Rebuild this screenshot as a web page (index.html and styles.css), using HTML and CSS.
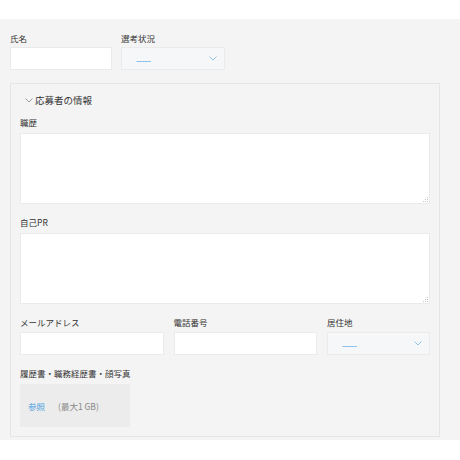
FILE: index.html
```html
<!DOCTYPE html>
<html lang="ja">
<head>
<meta charset="utf-8">
<link rel="stylesheet" href="styles.css">
</head>
<body>
<div class="topbar"></div>
<main class="page">
  <div class="row-top">
    <div class="field">
      <div class="label">氏名</div>
      <input class="input" type="text">
    </div>
    <div class="field">
      <div class="label">選考状況</div>
      <div class="select"><span class="dash">-----</span>
        <svg class="chev" width="8" height="5" viewBox="0 0 8 5"><polyline points="0.5,0.5 4,4 7.5,0.5" fill="none" stroke="#8fc3ec" stroke-width="1"/></svg>
      </div>
    </div>
  </div>

  <section class="panel">
    <div class="panel-head">
      <svg class="head-chev" width="8" height="5" viewBox="0 0 8 5"><polyline points="0.5,0.5 4,4 7.5,0.5" fill="none" stroke="#999" stroke-width="1"/></svg>
      <span>応募者の情報</span>
    </div>

    <div class="field block first">
      <div class="label">職歴</div>
      <div class="area-wrap">
        <textarea class="area"></textarea>
        <svg class="grip" width="7" height="7" viewBox="0 0 7 7"><g fill="#c4c4c4"><rect x="5" y="1" width="1" height="1"/><rect x="3" y="3" width="1" height="1"/><rect x="5" y="3" width="1" height="1"/><rect x="1" y="5" width="1" height="1"/><rect x="3" y="5" width="1" height="1"/><rect x="5" y="5" width="1" height="1"/></g></svg>
      </div>
    </div>

    <div class="field block">
      <div class="label">自己PR</div>
      <div class="area-wrap">
        <textarea class="area"></textarea>
        <svg class="grip" width="7" height="7" viewBox="0 0 7 7"><g fill="#c4c4c4"><rect x="5" y="1" width="1" height="1"/><rect x="3" y="3" width="1" height="1"/><rect x="5" y="3" width="1" height="1"/><rect x="1" y="5" width="1" height="1"/><rect x="3" y="5" width="1" height="1"/><rect x="5" y="5" width="1" height="1"/></g></svg>
      </div>
    </div>

    <div class="row-three block">
      <div class="field">
        <div class="label">メールアドレス</div>
        <input class="input" type="text">
      </div>
      <div class="field">
        <div class="label">電話番号</div>
        <input class="input" type="text">
      </div>
      <div class="field">
        <div class="label">居住地</div>
        <div class="select"><span class="dash">-----</span>
          <svg class="chev" width="8" height="5" viewBox="0 0 8 5"><polyline points="0.5,0.5 4,4 7.5,0.5" fill="none" stroke="#8fc3ec" stroke-width="1"/></svg>
        </div>
      </div>
    </div>

    <div class="field block">
      <div class="label">履歴書・職務経歴書・顔写真</div>
      <div class="upload">
        <span class="browse">参照</span>
        <span class="limit">(最大1 GB)</span>
      </div>
    </div>
  </section>
</main>
</body>
</html>
```

FILE: styles.css
```css
* { box-sizing: border-box; }

html, body {
  margin: 0;
  padding: 0;
  background: #ffffff;
  font-family: "Noto Sans CJK JP", "Noto Sans", sans-serif;
  color: #444;
}

.topbar {
  height: 19px;
  background: #ffffff;
}

.page {
  background: #f4f4f4;
  padding: 13px 20px 4px 10px;
  height: 421px;
}

.row-top {
  display: grid;
  grid-template-columns: 102px 104px;
  column-gap: 9px;
}

.field {
  display: flex;
  flex-direction: column;
  min-width: 0;
}

.label {
  font-size: 8.5px;
  line-height: 12px;
  height: 12px;
  margin-bottom: 3px;
  color: #333;
  font-weight: 400;
  white-space: nowrap;
}

.input {
  width: 100%;
  min-width: 0;
  height: 23px;
  border: 1px solid #ebebeb;
  background: #fff;
  margin: 0;
  padding: 0 6px;
  outline: none;
  font-family: inherit;
}

.select {
  height: 23px;
  border: 1px solid #ebebeb;
  background: #f6f7f9;
  display: flex;
  align-items: center;
  justify-content: space-between;
  padding: 2px 7px 0 14px;
}

.dash {
  font-size: 10px;
  line-height: 10px;
  color: #5aaae6;
  letter-spacing: -0.6px;
}

.chev {
  display: block;
  margin-top: -2px;
}

.panel {
  margin-top: 13px;
  border: 1px solid #e5e5e5;
  padding: 9px 9px 9px 9px;
}

.panel-head {
  display: flex;
  align-items: center;
  gap: 2px;
  padding-left: 5px;
  height: 14px;
  font-size: 9.5px;
  line-height: 14px;
  color: #333;
}

.head-chev {
  display: block;
}

.block {
  margin-top: 12px;
}

.block.first {
  margin-top: 9px;
}

.block .label {
  margin-bottom: 5px;
}

.area-wrap {
  position: relative;
}

.area {
  height: 71px;
  width: 100%;
  border: 1px solid #ebebeb;
  background: #fff;
  margin: 0;
  padding: 4px;
  resize: none;
  outline: none;
  display: block;
  font-family: inherit;
}

.grip {
  position: absolute;
  right: 1px;
  bottom: 1px;
  display: block;
}

.row-three {
  display: grid;
  grid-template-columns: minmax(0, 1fr) minmax(0, 1fr) 103px;
  column-gap: 10px;
}

.row-three .label {
  margin-bottom: 4px;
}

.upload {
  width: 110px;
  height: 43px;
  background: #ececec;
  display: flex;
  align-items: center;
  gap: 13px;
  padding-left: 8px;
  font-size: 8.5px;
}

.browse {
  color: #4a9fe0;
}

.limit {
  color: #888;
}
```
